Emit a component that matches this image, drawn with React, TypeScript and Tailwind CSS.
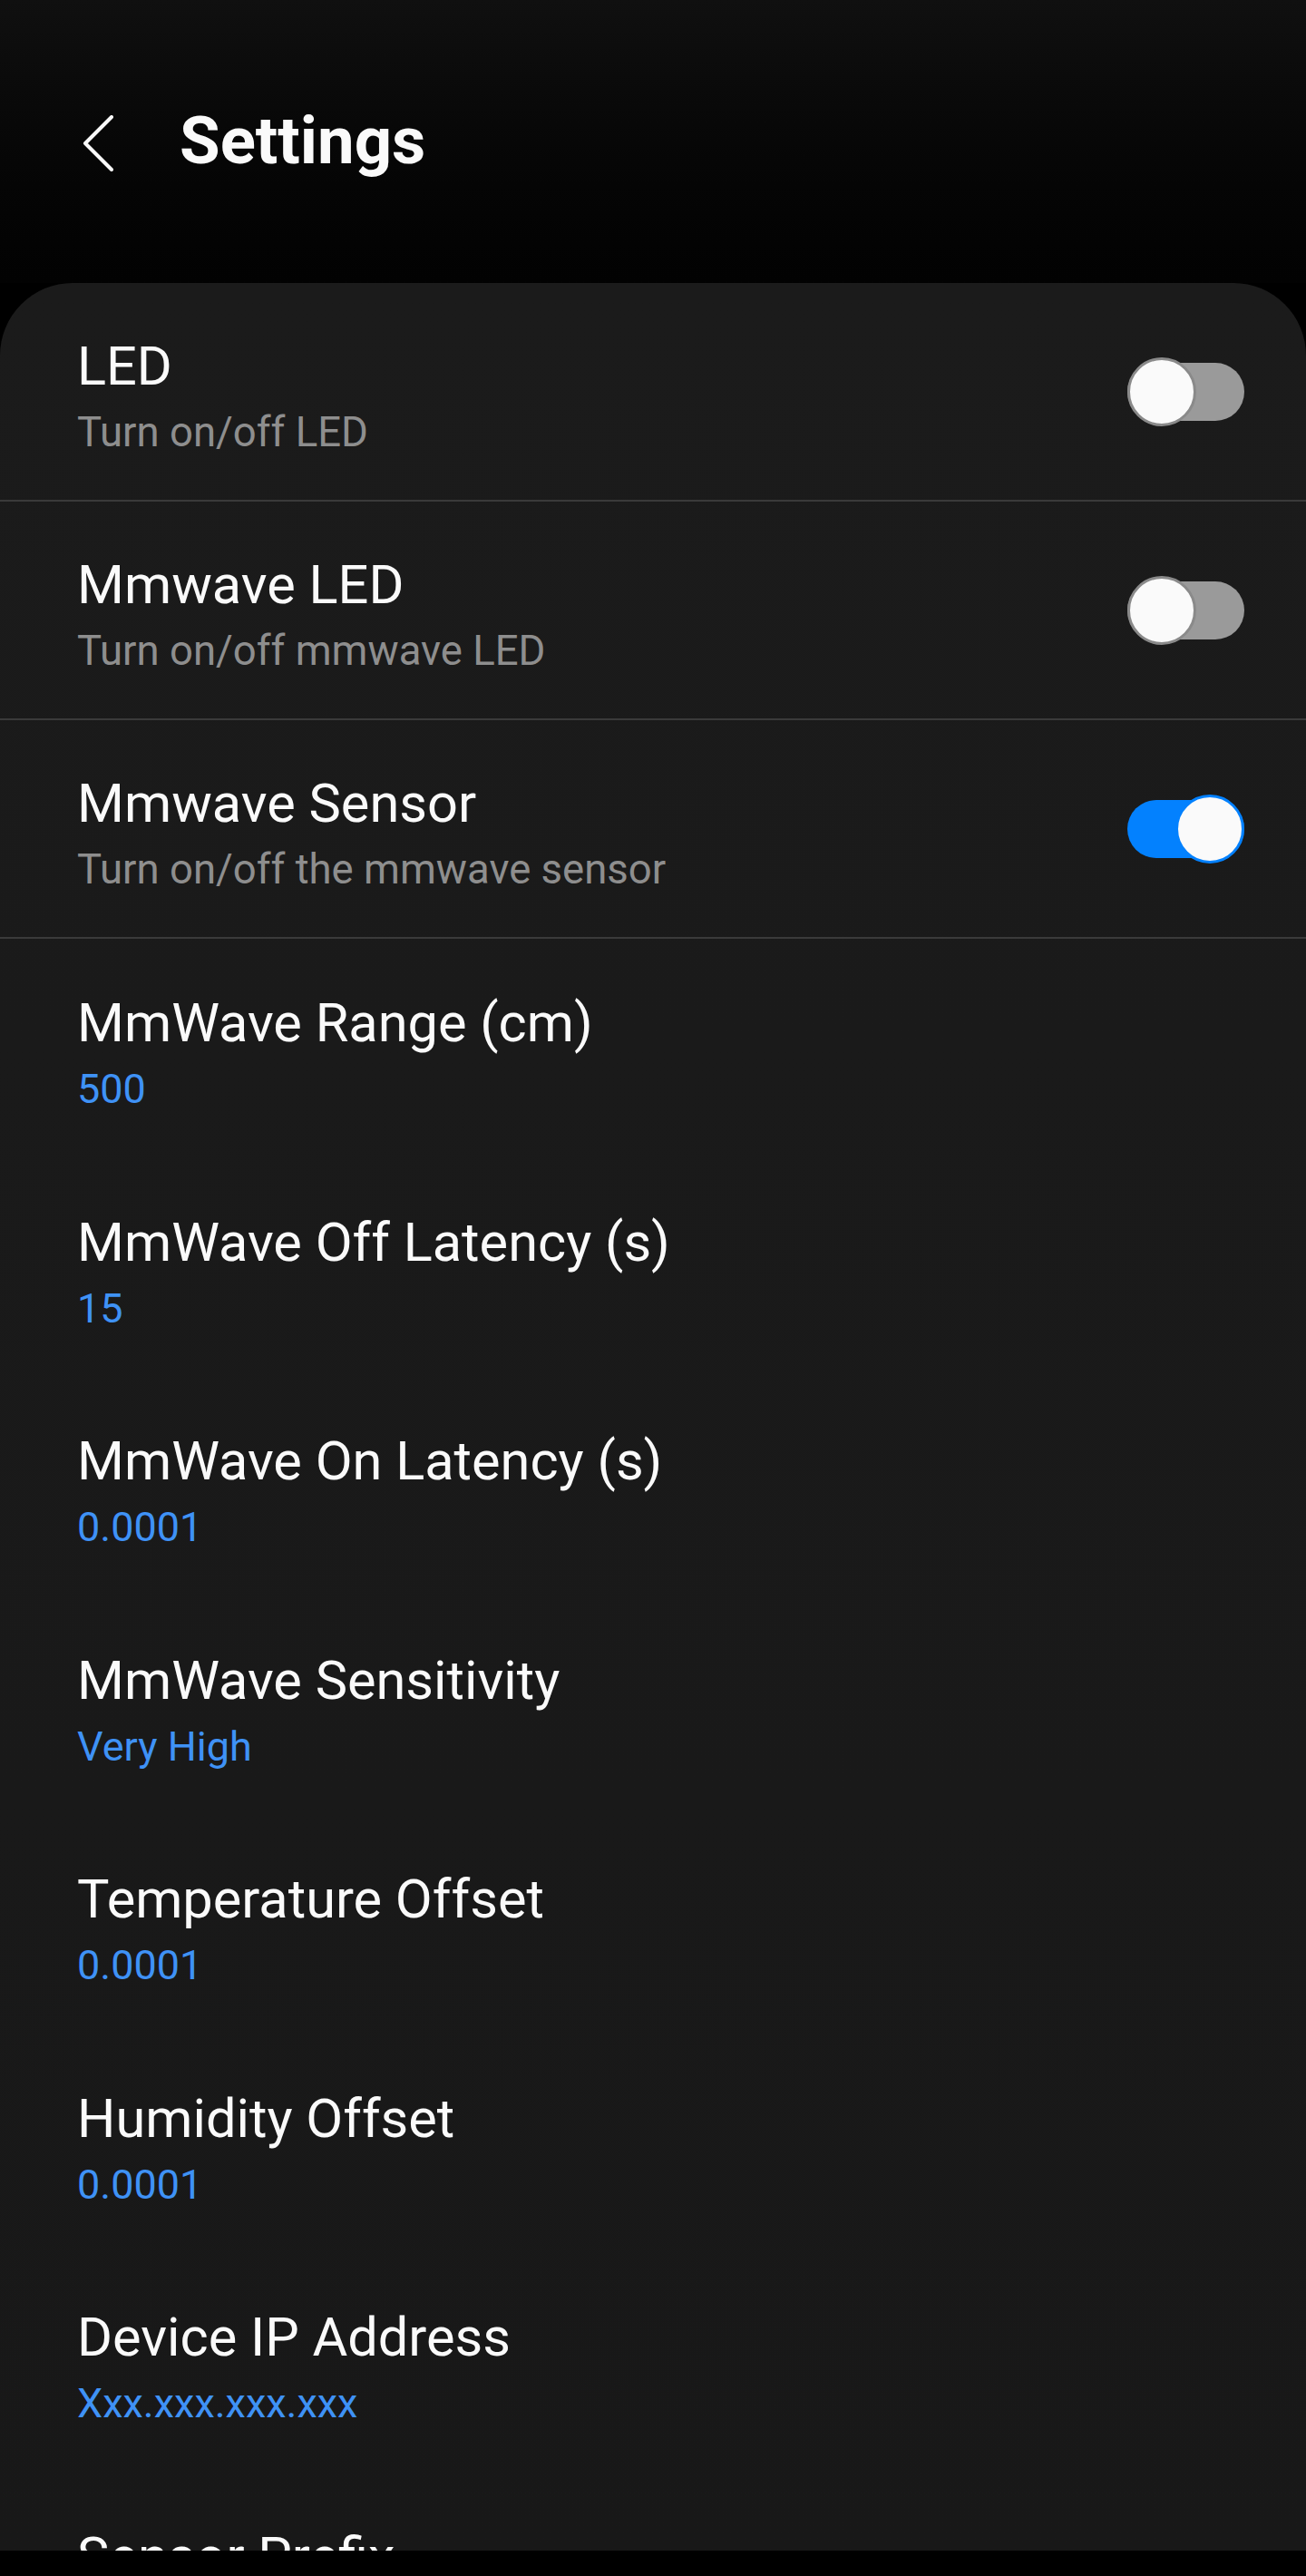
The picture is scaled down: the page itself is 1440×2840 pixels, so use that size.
import React, { useState } from 'react';

type ToggleItem = { title: string; sub: string; on: boolean };
type ValueItem = { title: string; value: string };

const toggles: ToggleItem[] = [
    { title: 'LED', sub: 'Turn on/off LED', on: false },
    { title: 'Mmwave LED', sub: 'Turn on/off mmwave LED', on: false },
    { title: 'Mmwave Sensor', sub: 'Turn on/off the mmwave sensor', on: true },
];

const values: ValueItem[] = [
    { title: 'MmWave Range (cm)', value: '500' },
    { title: 'MmWave Off Latency (s)', value: '15' },
    { title: 'MmWave On Latency (s)', value: '0.0001' },
    { title: 'MmWave Sensitivity', value: 'Very High' },
    { title: 'Temperature Offset', value: '0.0001' },
    { title: 'Humidity Offset', value: '0.0001' },
    { title: 'Device IP Address', value: 'Xxx.xxx.xxx.xxx' },
    { title: 'Sensor Prefix', value: '' },
];

function Switch({ on, onClick }: { on: boolean; onClick: () => void }) {
    return (
        <button onClick={onClick} className="relative w-[129px] h-[76px] shrink-0">
            <span className={`absolute left-0 right-0 top-[6px] h-[64px] rounded-full ${on ? 'bg-[#0381fe]' : 'bg-[#9a9a9a]'}`} />
            <span
                className={`absolute top-0 w-[76px] h-[76px] rounded-full bg-[#fafafa] border-[3px] ${on ? 'right-0 border-[#0381fe]' : 'left-0 border-[#8a8a8a]'}`}
            />
        </button>
    );
}

export default function App() {
    const [states, setStates] = useState(toggles.map((t) => t.on));

    return (
        <div className="w-[1440px] h-[2840px] overflow-hidden flex flex-col bg-black font-['Roboto',sans-serif]">
            <div className="h-[312px] shrink-0 flex items-start pt-[128px] pl-[91px] bg-gradient-to-b from-[#101010] to-[#020202]">
                <svg width="36" height="62" viewBox="0 0 36 62" fill="none" className="mt-[-1px]">
                    <path d="M32 2 L3 31 L32 60" stroke="#fafafa" strokeWidth="4" strokeLinecap="round" strokeLinejoin="round" />
                </svg>
                <h1 className="ml-[71px] mt-[-15px] text-[72.5px] leading-[86px] font-bold text-[#fafafa]">Settings</h1>
            </div>

            <div className="flex-1 rounded-t-[80px] bg-gradient-to-b from-[#1b1b1b] to-[#181818] overflow-hidden">
                {toggles.map((t, i) => (
                    <div key={t.title} className="h-[241px] flex items-start justify-between pl-[85px] pr-[68px] border-b-[2px] border-[#3a3a3a]">
                        <div className="pt-[58px]">
                            <div className="text-[59.5px] leading-[69px] text-[#fafafa]">{t.title}</div>
                            <div className="mt-[11px] text-[45.5px] leading-[54px] text-[#8e8e8e]">{t.sub}</div>
                        </div>
                        <div className="pt-[82px]">
                            <Switch
                                on={states[i]}
                                onClick={() => setStates(states.map((s, j) => (j === i ? !s : s)))}
                            />
                        </div>
                    </div>
                ))}

                {values.map((v) => (
                    <div key={v.title} className="h-[241.5px] pl-[85px] pt-[59px]">
                        <div className="text-[59.5px] leading-[69px] text-[#fafafa]">{v.title}</div>
                        <div className="mt-[11px] text-[45px] leading-[54px] text-[#3f92f6]">{v.value}</div>
                    </div>
                ))}
            </div>

            <div className="h-[28px] shrink-0 bg-black" />
        </div>
    );
}
